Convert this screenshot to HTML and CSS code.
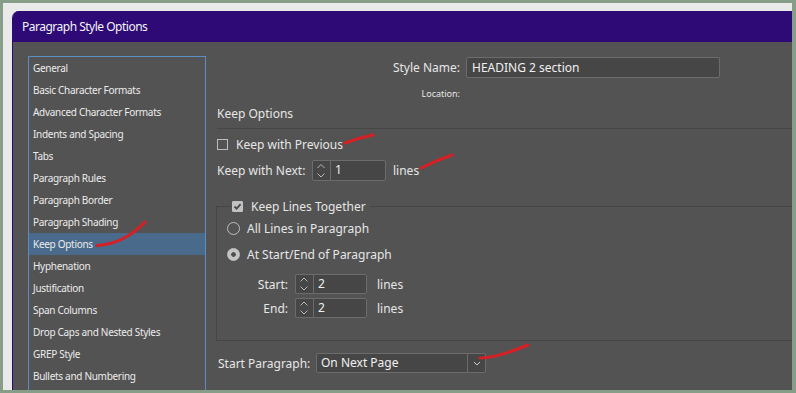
FILE: index.html
```html
<!DOCTYPE html>
<html>
<head>
<meta charset="utf-8">
<link rel="stylesheet" href="styles.css">
</head>
<body>
<div class="screen">
  <div class="frame">
    <div class="dialog">
      <div class="titlebar">Paragraph Style Options</div>
      <div class="content">
        <ul class="nav">
          <li>General</li>
          <li>Basic Character Formats</li>
          <li>Advanced Character Formats</li>
          <li>Indents and Spacing</li>
          <li>Tabs</li>
          <li>Paragraph Rules</li>
          <li>Paragraph Border</li>
          <li>Paragraph Shading</li>
          <li class="active">Keep Options</li>
          <li>Hyphenation</li>
          <li>Justification</li>
          <li>Span Columns</li>
          <li>Drop Caps and Nested Styles</li>
          <li>GREP Style</li>
          <li>Bullets and Numbering</li>
        </ul>
        <div class="panel">
          <div class="name-row">
            <span class="right-lbl">Style Name:</span>
            <div class="field name-field">HEADING 2 section</div>
          </div>
          <div class="loc-row"><span class="right-lbl small">Location:</span></div>
          <div class="section-title">Keep Options</div>
          <div class="check-row"><span class="cb"></span><span>Keep with Previous</span></div>
          <div class="next-row">
            <span class="next-lbl">Keep with Next:</span>
            <div class="spin wide">
              <span class="step"><svg width="18" height="19" viewBox="0 0 18 19"><path d="M5.5 7 L9 3.5 L12.5 7 M5.5 12.5 L9 16 L12.5 12.5" fill="none" stroke="#b8b8b8" stroke-width="1"/></svg></span>
              <span class="val">1</span>
            </div>
            <span class="unit">lines</span>
          </div>
          <fieldset class="group">
            <legend><span class="cb checked"><svg width="11" height="11" viewBox="0 0 11 11"><path d="M2.5 5.5 L4.6 7.6 L8.6 3.2" fill="none" stroke="#4a4a4a" stroke-width="1.8"/></svg></span><span>Keep Lines Together</span></legend>
            <div class="radio-row first"><span class="radio"></span><span>All Lines in Paragraph</span></div>
            <div class="radio-row"><span class="radio on"></span><span>At Start/End of Paragraph</span></div>
            <div class="se-row first">
              <span class="se-lbl">Start:</span>
              <div class="spin">
                <span class="step"><svg width="18" height="18" viewBox="0 0 18 18"><path d="M5.5 6.5 L9 3 L12.5 6.5 M5.5 11.5 L9 15 L12.5 11.5" fill="none" stroke="#b8b8b8" stroke-width="1"/></svg></span>
                <span class="val">2</span>
              </div>
              <span class="unit">lines</span>
            </div>
            <div class="se-row">
              <span class="se-lbl">End:</span>
              <div class="spin">
                <span class="step"><svg width="18" height="18" viewBox="0 0 18 18"><path d="M5.5 6.5 L9 3 L12.5 6.5 M5.5 11.5 L9 15 L12.5 11.5" fill="none" stroke="#b8b8b8" stroke-width="1"/></svg></span>
                <span class="val">2</span>
              </div>
              <span class="unit">lines</span>
            </div>
          </fieldset>
          <div class="para-row">
            <span class="para-lbl">Start Paragraph:</span>
            <div class="select">
              <span class="sel-val">On Next Page</span>
              <span class="sel-btn"><svg width="18" height="18" viewBox="0 0 18 18"><path d="M6 8 L9 11 L12 8" fill="none" stroke="#cfcfcf" stroke-width="1"/></svg></span>
            </div>
          </div>
        </div>
      </div>
    </div>
  </div>
  <svg class="marks" width="796" height="393" viewBox="0 0 796 393">
    <g fill="none" stroke="#d71f26" stroke-width="3" stroke-linecap="round">
      <path d="M345 143 Q358 138 373 135"/>
      <path d="M421 168 Q437 160 452 155"/>
      <path d="M97 245.5 Q124 244 145 222"/>
      <path d="M480 358 Q496 358 528 345"/>
    </g>
  </svg>
</div>
</body>
</html>
```

FILE: styles.css
```css
* { box-sizing: border-box; }
html, body { margin: 0; padding: 0; }
body {
  width: 796px;
  height: 393px;
  overflow: hidden;
  background: #869e88;
  font-family: "Noto Sans", "Open Sans", sans-serif;
  color: #e6e6e6;
}
.screen {
  position: relative;
  width: 796px;
  height: 393px;
  padding: 3px 4px 3px 3px;
}
.frame {
  width: 789px;
  height: 387px;
  background: #e9e9e9;
  padding: 8px 0 0 9px;
}
.dialog {
  width: 780px;
  height: 379px;
  border-top-left-radius: 7px;
  overflow: hidden;
  background: #535353;
  border-left: 1px solid #2c0a6e;
}
.titlebar {
  height: 31px;
  background: #2d0a76;
  color: #f4f4f4;
  font-size: 12px;
  letter-spacing: -0.5px;
  line-height: 32px;
  padding-left: 9px;
}
.content {
  display: flex;
  padding: 14px 0 0 15px;
  height: 348px;
}
.nav {
  list-style: none;
  margin: 0;
  padding: 0;
  width: 178px;
  height: 340px;
  border: 1px solid #5a8ec2;
  font-size: 10px;
  letter-spacing: -0.3px;
  flex: none;
}
.nav li {
  height: 22px;
  line-height: 22px;
  padding-left: 4px;
  color: #ececec;
  white-space: nowrap;
}
.nav li.active { background: #4a6a8b; }
.panel {
  flex: 1;
  margin-left: 11px;
  padding-top: 1px;
  font-size: 12px;
  display: flex;
  flex-direction: column;
}
.name-row {
  display: flex;
  align-items: center;
  height: 21px;
}
.right-lbl {
  width: 243px;
  text-align: right;
  margin-right: 6px;
  white-space: nowrap;
}
.right-lbl.small { font-size: 9px; }
.field {
  height: 21px;
  background: #464646;
  border: 1px solid #6c6c6c;
  border-radius: 2px;
  color: #f0f0f0;
  line-height: 19px;
  padding-left: 5px;
}
.name-field { width: 254px; }
.loc-row {
  display: flex;
  align-items: center;
  height: 14px;
  margin-top: 8px;
}
.section-title {
  margin-top: 6px;
  height: 23px;
  line-height: 16px;
  border-bottom: 1px solid #464646;
}
.check-row {
  display: flex;
  align-items: center;
  height: 14px;
  margin-top: 8px;
  white-space: nowrap;
}
.cb {
  width: 11px;
  height: 11px;
  border: 1px solid #bdbdbd;
  margin-right: 8px;
  flex: none;
  display: inline-block;
}
.cb.checked {
  background: #c2c2c2;
  border-color: #c2c2c2;
  border-radius: 1px;
  position: relative;
}
.cb.checked svg { display: block; margin: -1px 0 0 -1px; }
.next-row {
  display: flex;
  align-items: center;
  height: 21px;
  margin-top: 9px;
}
.next-lbl { width: 95px; white-space: nowrap; }
.spin {
  display: flex;
  width: 72px;
  height: 20px;
  background: #464646;
  border: 1px solid #6c6c6c;
  border-radius: 2px;
}
.spin.wide { width: 74px; height: 21px; }
.step {
  width: 18px;
  border-right: 1px solid #6c6c6c;
  flex: none;
}
.step svg { display: block; margin-left: -1px; }
.val {
  padding-left: 4px;
  line-height: 18px;
  color: #f0f0f0;
}
.unit { margin-left: 7px; }
.group {
  margin: 18px -4px 0 -1px;
  padding: 0 0 0 10px;
  border: 1px solid #464646;
  border-right: none;
  height: 142px;
  min-width: 0;
}
.group legend {
  margin-left: 4px;
  padding: 0 4px 0 1px;
  display: flex;
  align-items: center;
  height: 14px;
}
.radio-row {
  display: flex;
  align-items: center;
  height: 14px;
  margin-top: 12px;
  white-space: nowrap;
}
.radio-row.first { margin-top: 8px; }
.radio {
  width: 13px;
  height: 13px;
  border: 1px solid #bdbdbd;
  border-radius: 50%;
  margin-right: 7px;
  flex: none;
}
.radio.on {
  background: radial-gradient(circle, #4f4f4f 0 2px, #c4c4c4 2.6px);
  border-color: #c4c4c4;
}
.se-row {
  display: flex;
  align-items: center;
  height: 20px;
  margin-top: 4px;
}
.se-row.first { margin-top: 13px; }
.se-lbl {
  width: 61px;
  text-align: right;
  margin-right: 7px;
}
.se-row .unit { margin-left: 10px; }
.para-row {
  display: flex;
  align-items: center;
  height: 20px;
  margin-top: 12px;
  padding-left: 1px;
}
.para-lbl { width: 98px; white-space: nowrap; }
.select {
  display: flex;
  width: 170px;
  height: 20px;
  background: #464646;
  border: 1px solid #6c6c6c;
  border-radius: 2px;
}
.sel-val {
  flex: 1;
  padding-left: 4px;
  line-height: 18px;
  color: #f0f0f0;
}
.sel-btn {
  width: 18px;
  border-left: 1px solid #6c6c6c;
}
.sel-btn svg { display: block; }
.marks {
  position: absolute;
  left: 0;
  top: 0;
  pointer-events: none;
}
```
